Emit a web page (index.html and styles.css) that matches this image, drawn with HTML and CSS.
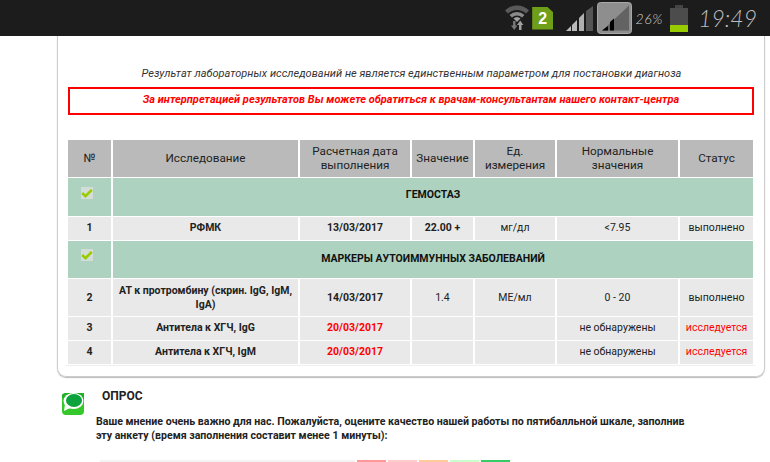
FILE: index.html
```html
<!DOCTYPE html>
<html lang="ru">
<head>
<meta charset="utf-8">
<title>Результаты</title>
<link rel="stylesheet" href="styles.css">
</head>
<body>
<header class="status">
  <svg class="ic wifi" width="24" height="26" viewBox="0 0 24 26">
    <path d="M0 6.500A17 17 0 0 1 24 6.500L21 9.500A13 13 0 0 0 3 9.500Z" fill="#5a5a5a"/>
    <path d="M4.500 11A11 11 0 0 1 19.500 11L17 13.500A7.500 7.500 0 0 0 7 13.500Z" fill="#8a8a8a"/>
    <path d="M12 13A5 5 0 0 0 8.500 14.500L12 18L15.500 14.500A5 5 0 0 0 12 13Z" fill="#a0a0a0"/>
    <path d="M8 17v4.500H6l3.200 4.500 3.200-4.500H10.500V17z" fill="#777"/>
    <path d="M14 26v-5H12l3.200-4.500L18.400 21H16.500v5z" fill="#a0a0a0"/>
  </svg>
  <div class="sim">2</div>
  <svg class="ic signal" width="28" height="27" viewBox="0 0 28 27">
    <path d="M0 26L5 21V26Z" fill="#bbb"/>
    <path d="M6 20L11 15V26H6Z" fill="#bbb"/>
    <path d="M13 13L18 8V26H13Z" fill="#b0b0b0"/>
    <path d="M20 6L27 1V26H20Z" fill="#555"/>
  </svg>
  <svg class="ic net" width="35" height="32" viewBox="0 0 35 32">
    <rect x="0.500" y="0.500" width="34" height="31" rx="3" fill="#8e8e8e" stroke="#a8a8a8"/>
    <path d="M32 3.500V28.500H5.500Z" fill="#636363"/>
    <path d="M5 28.500L11 24V28.500Z" fill="#000"/>
    <path d="M13 28.500V20L17 16.500V28.500Z" fill="#000"/>
  </svg>
  <span class="pct">26%</span>
  <svg class="ic batt" width="18" height="27" viewBox="0 0 18 27">
    <rect x="5" y="0" width="8" height="3" fill="#444"/>
    <rect x="0" y="3" width="18" height="17" fill="#4c4c4c"/>
    <rect x="0" y="20" width="18" height="7" fill="#9c0"/>
  </svg>
  <time class="clock">19:49</time>
</header>

<main class="card">
  <p class="note">Результат лабораторных исследований не является единственным параметром для постановки диагноза</p>
  <p class="alert">За интерпретацией результатов Вы можете обратиться к врачам-консультантам нашего контакт-центра</p>
  <table class="res">
    <colgroup>
      <col class="c1"><col class="c2"><col class="c3"><col class="c4"><col class="c5"><col class="c6"><col class="c7">
    </colgroup>
    <thead>
      <tr class="rh"><th>№</th><th>Исследование</th><th>Расчетная дата<br>выполнения</th><th>Значение</th><th>Ед.<br>измерения</th><th>Нормальные<br>значения</th><th>Статус</th></tr>
    </thead>
    <tbody>
      <tr class="rg">
        <td class="chk"><span class="box"><svg width="12" height="12" viewBox="0 0 12 12"><path d="M1.200 6L4.500 9.200L10.800 2.800" fill="none" stroke="#9c0" stroke-width="2.600"/></svg></span></td>
        <td colspan="6">ГЕМОСТАЗ</td>
      </tr>
      <tr class="rs"><td class="b">1</td><td class="b">РФМК</td><td class="b">13/03/2017</td><td class="b">22.00 +</td><td>мг/дл</td><td>&lt;7.95</td><td>выполнено</td></tr>
      <tr class="rg rg2">
        <td class="chk"><span class="box"><svg width="12" height="12" viewBox="0 0 12 12"><path d="M1.200 6L4.500 9.200L10.800 2.800" fill="none" stroke="#9c0" stroke-width="2.600"/></svg></span></td>
        <td colspan="6">МАРКЕРЫ АУТОИММУННЫХ ЗАБОЛЕВАНИЙ</td>
      </tr>
      <tr class="rt"><td class="b">2</td><td class="b">АТ к протромбину (скрин. IgG, IgM, IgA)</td><td class="b">14/03/2017</td><td>1.4</td><td>МЕ/мл</td><td>0 - 20</td><td>выполнено</td></tr>
      <tr class="rs"><td class="b">3</td><td class="b">Антитела к ХГЧ, IgG</td><td class="b red">20/03/2017</td><td></td><td></td><td>не обнаружены</td><td class="red">исследуется</td></tr>
      <tr class="rs"><td class="b">4</td><td class="b">Антитела к ХГЧ, IgM</td><td class="b red">20/03/2017</td><td></td><td></td><td>не обнаружены</td><td class="red">исследуется</td></tr>
    </tbody>
  </table>
</main>

<section class="poll">
  <svg class="logo" width="22" height="22" viewBox="0 0 22 22">
    <rect x="0" y="0" width="22" height="22" rx="4" fill="#35c82a"/>
    <path d="M0 4V1.500L3 0H22V10H10Z" fill="#22b028"/>
    <ellipse cx="11.500" cy="8" rx="10" ry="8" fill="#fff"/>
    <path d="M3 11L2 18L8 15Z" fill="#fff"/>
    <ellipse cx="12" cy="7.500" rx="8" ry="6.500" fill="#0ca23c"/>
  </svg>
  <div class="poll-body">
    <h2 class="poll-title">ОПРОС</h2>
    <p class="poll-text">Ваше мнение очень важно для нас. Пожалуйста, оцените качество нашей работы по пятибалльной шкале, заполнив эту анкету (время заполнения составит менее 1 минуты):</p>
    <div class="rate">
      <span class="rate-q"></span>
      <span class="r1"></span><span class="r2"></span><span class="r3"></span><span class="r4"></span><span class="r5"></span>
    </div>
  </div>
</section>
</body>
</html>
```
FILE: styles.css
```css
html, body { margin: 0; padding: 0; background: #fff; height: 462px; overflow: hidden; }
body { font-family: Roboto, "Liberation Sans", sans-serif; color: #222; }

.status { height: 36px; background: #1c1c1c; display: flex; align-items: center; justify-content: flex-end; padding-right: 13px; box-sizing: border-box; }
.ic { display: block; flex: none; }
.wifi { margin-right: 3px; margin-top: -3px; }
.sim { width: 21px; height: 23px; background: #6f9e18; color: #fff; font: bold 16px/23px "Liberation Sans", sans-serif; text-align: center; clip-path: polygon(0 0, 70% 0, 100% 25%, 100% 100%, 0 100%); margin-right: 13px; }
.signal { margin-right: 3px; }
.pct { width: 34px; margin-right: 4px; flex: none; text-align: center; color: #d0d0d0; font: italic 300 14px Lato, sans-serif; letter-spacing: 0.6px; white-space: nowrap; }
.batt { margin-right: 10px; }
.clock { color: #bdbdbd; font: italic 300 23px Lato, sans-serif; white-space: nowrap; }

.card { box-sizing: border-box; margin: 0 5px 0 57px; height: 341px; padding-top: 31px; border: 1px solid #ccc; border-top: 0; border-radius: 0 0 9px 9px; box-shadow: 0 1px 1px #bbb; }
.note { margin: 0; text-align: center; font-style: italic; font-size: 11px; line-height: 13px; letter-spacing: 0.02px; color: #333; padding-left: 25px; width: 657px; }
.alert { box-sizing: border-box; width: 686px; height: 28px; margin: 7px 0 0 10px; border: 2px solid #f00; color: #f00; font-weight: bold; font-style: italic; font-size: 11px; line-height: 21px; letter-spacing: 0.02px; text-align: center; }

.res { table-layout: fixed; border-collapse: separate; border-spacing: 2px 1px; width: 689px; margin: 24px 0 0 8px; font-size: 10.500px; text-align: center; color: #222; border-bottom: 1px solid #eee; }
.c1 { width: 43px; } .c2 { width: 185px; } .c3 { width: 110px; } .c4 { width: 61px; } .c5 { width: 80px; } .c6 { width: 121px; } .c7 { width: 73px; }
.res th, .res td { box-sizing: border-box; padding: 0 2px; vertical-align: middle; }
.res th { background: #bababa; font-weight: normal; font-size: 11.700px; line-height: 14px; height: 37px; padding-bottom: 2px; }
.rg td { background: #add2bf; height: 38px; font-weight: bold; color: #111; padding-bottom: 5px; }
.rg2 td { height: 37px; padding-bottom: 2px; }
.rs td { background: #e9e9e9; height: 23px; padding-bottom: 2px; }
.rt td { background: #e9e9e9; height: 37px; }
.rt .b { line-height: 14px; }
.res .b { font-weight: bold; }
.res .red { color: #f00; }
.res .chk { vertical-align: top; padding: 9px 0 0 13px; }
.res .rg2 .chk { padding-top: 8px; }
.box { display: block; width: 12px; height: 12px; background: #d3dcd6; }
.box svg { display: block; }

.poll { display: flex; margin: 12px 0 0 62px; align-items: flex-start; }
.logo { margin-top: 4px; margin-right: 15px; flex: none; }
.poll-body { width: 600px; }
.poll-title { margin: 0 0 0 3px; font-size: 12px; line-height: 14px; font-weight: bold; color: #222; }
.poll-text { margin: 12px 0 0 -3px; font-size: 10.600px; line-height: 14px; font-weight: bold; color: #222; }
.rate { display: flex; gap: 2px; margin-top: 17px; margin-left: 1px; height: 2px; }
.rate span { display: block; width: 29px; height: 2px; }
.rate .rate-q { width: 255px; background: #f3f3f3; }
.r1 { background: #f99; } .r2 { background: #fcc; } .r3 { background: #fc9; } .r4 { background: #cfc; } .r5 { background: #3c6; }
```
